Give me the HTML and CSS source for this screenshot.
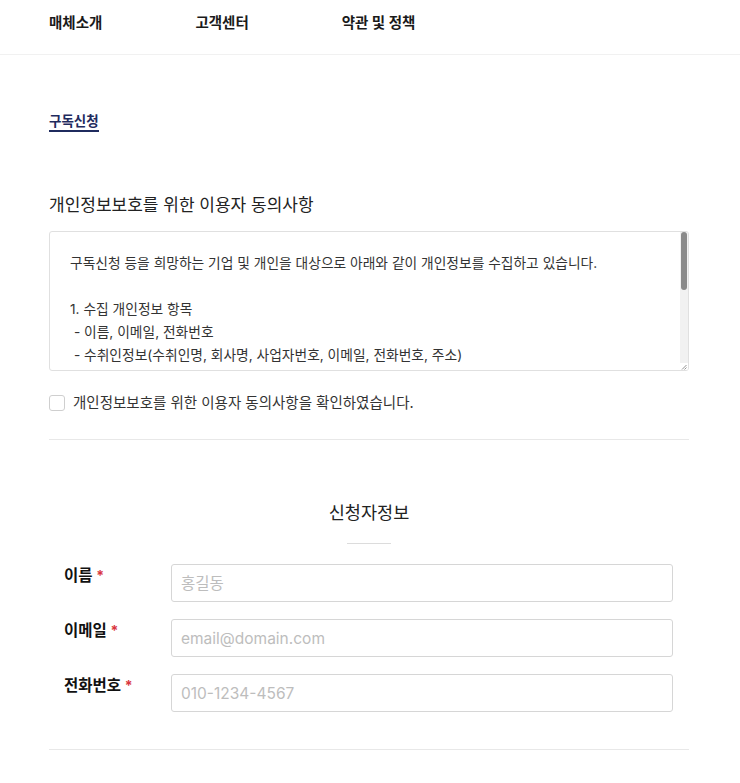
FILE: index.html
```html
<!DOCTYPE html>
<html lang="ko">
<head>
<meta charset="utf-8">
<title>구독신청</title>
<link rel="stylesheet" href="styles.css">
</head>
<body>
<header class="nav">
  <a class="nav-item" href="#">매체소개</a>
  <a class="nav-item" href="#">고객센터</a>
  <a class="nav-item" href="#">약관 및 정책</a>
</header>
<main class="container">
  <div class="tabs"><span class="tab">구독신청</span></div>
  <h2 class="section-title">개인정보보호를 위한 이용자 동의사항</h2>
  <div class="terms-box">
    <div class="terms">구독신청 등을 희망하는 기업 및 개인을 대상으로 아래와 같이 개인정보를 수집하고 있습니다.

1. 수집 개인정보 항목
 - 이름, 이메일, 전화번호
 - 수취인정보(수취인명, 회사명, 사업자번호, 이메일, 전화번호, 주소)

2. 개인정보의 수집 및 이용목적
 - 구독신청 접수 및 처리, 신문 배송, 고객 문의 응대

3. 개인정보의 보유 및 이용기간
 - 구독 해지 시까지 보유하며, 관계 법령에 따라 보존합니다.</div>
    <div class="scrollbar">
      <div class="scroll-track"><div class="scroll-thumb"></div></div>
      <div class="grip">
        <svg width="8" height="6" viewBox="0 0 8 6"><path d="M2 5.5 L6.5 1 M4.5 5.5 L6.5 3.5" stroke="#777" stroke-width="0.8" fill="none"/></svg>
      </div>
    </div>
  </div>
  <label class="agree">
    <input type="checkbox" class="agree-box">
    <span class="agree-text">개인정보보호를 위한 이용자 동의사항을 확인하였습니다.</span>
  </label>
  <hr class="divider">
  <h3 class="form-title">신청자정보</h3>
  <div class="title-line"></div>
  <div class="form">
    <div class="row">
      <div class="label">이름 <span class="req">*</span></div>
      <input class="field" type="text" placeholder="홍길동">
    </div>
    <div class="row">
      <div class="label">이메일 <span class="req">*</span></div>
      <input class="field" type="text" placeholder="email@domain.com">
    </div>
    <div class="row">
      <div class="label">전화번호 <span class="req">*</span></div>
      <input class="field" type="text" placeholder="010-1234-4567">
    </div>
  </div>
  <hr class="divider bottom">
</main>
</body>
</html>
```

FILE: styles.css
```css
* { box-sizing: border-box; }
html, body { margin: 0; padding: 0; background: #fff; }
body {
  font-family: Inter, "Noto Sans CJK KR", sans-serif;
  color: #222;
}
.nav {
  height: 55px;
  padding: 13px 49px 0;
  display: flex;
  gap: 93px;
  border-bottom: 1px solid #f1f1f1;
}
.nav-item {
  font-size: 14.5px;
  font-weight: 700;
  line-height: 20px;
  color: #1a1a1a;
  text-decoration: none;
}
.container {
  width: 640px;
  margin: 0 51px 0 49px;
}
.tabs { margin-top: 57px; display: flex; }
.tab {
  font-size: 13.5px;
  font-weight: 700;
  line-height: 18px;
  color: #1f2b5e;
  border-bottom: 2px solid #1f2b5e;
}
.section-title {
  margin: 61px 0 0;
  font-size: 17px;
  font-weight: 400;
  line-height: 24px;
  color: #222;
}
.terms-box {
  display: flex;
  height: 140px;
  margin-top: 14px;
  border: 1px solid #e0e0e0;
  border-radius: 3px;
  overflow: hidden;
}
.terms {
  flex: 1;
  padding: 20px 20px;
  white-space: pre-wrap;
  overflow: hidden;
  font-size: 13.75px;
  line-height: 23px;
  color: #333;
}
.scrollbar {
  width: 8px;
  flex: none;
  display: flex;
  flex-direction: column;
  background: #f1f1f1;
}
.scroll-track { flex: 1; padding: 0 1px; }
.scroll-thumb {
  height: 58px;
  background: #8a8a8a;
  border-radius: 3px;
}
.grip {
  height: 7px;
  display: flex;
  justify-content: flex-end;
  align-items: flex-end;
  background: #fff;
}
.agree {
  margin-top: 22px;
  display: flex;
  align-items: center;
  gap: 8px;
  line-height: 20px;
  cursor: pointer;
}
.agree-box {
  appearance: none;
  -webkit-appearance: none;
  margin: 0;
  width: 16px;
  height: 16px;
  border: 1px solid #cfcfcf;
  border-radius: 3px;
  background: #fff;
}
.agree-text {
  font-size: 14.5px;
  color: #333;
}
.divider {
  margin: 26px 0 0;
  border: 0;
  border-top: 1px solid #e8e8e8;
  height: 0;
}
.form-title {
  margin: 61px 0 0;
  text-align: center;
  font-size: 17.5px;
  font-weight: 400;
  line-height: 24px;
  color: #222;
}
.title-line {
  width: 44px;
  height: 1px;
  background: #dcdcdc;
  margin: 18px auto 0;
}
.form {
  margin-top: 20px;
  padding: 0 16px 0 15px;
  display: flex;
  flex-direction: column;
  gap: 17px;
}
.row {
  display: flex;
  align-items: flex-start;
}
.label {
  width: 107px;
  flex: none;
  font-size: 15.5px;
  font-weight: 700;
  line-height: 24px;
  color: #111;
}
.req { color: #d9363e; font-weight: 700; font-size: 14px; }
.field {
  flex: 1;
  height: 38px;
  border: 1px solid #d6d6d6;
  border-radius: 3px;
  padding: 0 9px;
  font-family: Inter, "Noto Sans CJK KR", sans-serif;
  font-size: 15.5px;
  color: #333;
  outline: none;
}
.field::placeholder { color: #bdbdbd; }
.divider.bottom { margin-top: 37px; }
```
